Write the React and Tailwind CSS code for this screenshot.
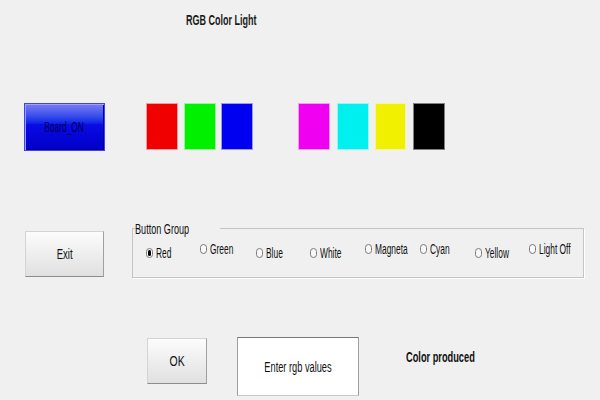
import { useState } from 'react';

const swatches = [
  { name: 'red', className: 'ml-[41px] w-[32px] bg-[#f00000] border-[#f59a9a]' },
  { name: 'green', className: 'ml-[6px] w-[32px] bg-[#00f000] border-[#9af59a]' },
  { name: 'blue', className: 'ml-[5px] w-[32px] bg-[#0000f0] border-[#9a9af5]' },
  { name: 'magenta', className: 'ml-[45px] w-[32px] bg-[#f000f0] border-[#f59af5]' },
  { name: 'cyan', className: 'ml-[7px] w-[32px] bg-[#00f0f0] border-[#9af5f5]' },
  { name: 'yellow', className: 'ml-[6px] w-[31px] bg-[#f0f000] border-[#f5f59a]' },
  { name: 'black', className: 'ml-[7px] w-[32px] bg-black border-[#808080]' },
];

const options = [
  { name: 'Red', width: 'w-[54px]', low: true },
  { name: 'Green', width: 'w-[56px]', low: false },
  { name: 'Blue', width: 'w-[54px]', low: true },
  { name: 'White', width: 'w-[55px]', low: true },
  { name: 'Magneta', width: 'w-[55px]', low: false },
  { name: 'Cyan', width: 'w-[55px]', low: false },
  { name: 'Yellow', width: 'w-[54px]', low: true },
  { name: 'Light Off', width: 'w-[45px]', low: false },
];

// grey windows-style push button
function FormButton({ label, className, textClass }) {
  return (
    <button
      className={`flex items-center justify-center bg-linear-to-b from-[#fcfcfc] to-[#e0e0e0] border border-[#d4d4d4] border-b-[#8c8c8c] border-r-[#a0a0a0] text-[14px] text-[#111] ${className}`}
    >
      <span className={`inline-block whitespace-nowrap ${textClass}`}>{label}</span>
    </button>
  );
}

export default function App() {
  const [color, setColor] = useState('Red');

  return (
    <div className="w-[600px] h-[400px] overflow-hidden bg-[#f0f0f0] flex flex-col font-['Liberation_Sans',Arial,sans-serif] leading-[16px]">
      {/* title */}
      <div className="h-[103px] pt-[11px] pl-[186px]">
        <span className="inline-block origin-left scale-x-[0.6] whitespace-nowrap text-[15px] leading-[17px] font-bold text-[#1a1a1a]">
          RGB Color Light
        </span>
      </div>

      {/* board button + colour swatches */}
      <div className="h-[125px] flex items-start">
        <button className="ml-[24px] w-[81px] h-[48px] flex items-center justify-center border border-[#4040f6] bg-linear-to-b from-[#7c7cf2] via-[#0a0ae6] via-45% to-[#0000c8] shadow-[inset_1px_1px_0_#a0a0f6,inset_-1px_-1px_0_#00009a] text-[14px] text-[#000050]">
          <span className="inline-block scale-x-[0.6] whitespace-nowrap">Board_ON</span>
        </button>
        {swatches.map((s) => (
          <div key={s.name} className={`h-[47px] border ${s.className}`} />
        ))}
      </div>

      {/* exit + radio group */}
      <div className="h-[109px] flex items-start">
        <FormButton label="Exit" className="ml-[25px] mt-[3px] w-[79px] h-[46px]" textClass="scale-x-[0.68]" />
        <div className="relative ml-[28px] w-[452px] h-[50px] border border-[#c4c4c4] shadow-[1px_1px_0_#ffffff]">
          <span className="absolute -top-[8px] left-[2px] bg-[#f0f0f0] pr-[2px] text-[14px] text-[#111]">
            <span className="inline-block origin-left scale-x-[0.65] whitespace-nowrap">Button Group</span>
          </span>
          <div className="flex items-start pt-[12px] pl-[13px]">
            {options.map((o) => (
              <label
                key={o.name}
                onClick={() => setColor(o.name)}
                className={`flex items-center gap-[3px] shrink-0 ${o.width} ${o.low ? 'mt-[4px]' : ''}`}
              >
                <span className="shrink-0 w-[7px] h-[10px] rounded-full border border-[#7a7a7a] bg-[#f8f8f8] flex items-center justify-center">
                  {color === o.name && <span className="w-[3px] h-[6px] rounded-full bg-black" />}
                </span>
                <span className="inline-block origin-left scale-x-[0.6] whitespace-nowrap text-[14px] text-[#111]">
                  {o.name}
                </span>
              </label>
            ))}
          </div>
        </div>
      </div>

      {/* ok + input + result */}
      <div className="flex items-start">
        <FormButton label="OK" className="ml-[147px] mt-[1px] w-[60px] h-[46px]" textClass="scale-x-[0.75]" />
        <div className="ml-[30px] w-[122px] h-[59px] flex items-center justify-center bg-white border border-[#a0a0a0] border-t-[#777777] border-b-[#c8c8c8] text-[14px] text-[#111]">
          <span className="inline-block scale-x-[0.66] whitespace-nowrap">Enter rgb values</span>
        </div>
        <div className="ml-[47px] mt-[12px] text-[14px] font-bold text-[#111]">
          <span className="inline-block origin-left scale-x-[0.66] whitespace-nowrap">Color produced</span>
        </div>
      </div>
    </div>
  );
}
